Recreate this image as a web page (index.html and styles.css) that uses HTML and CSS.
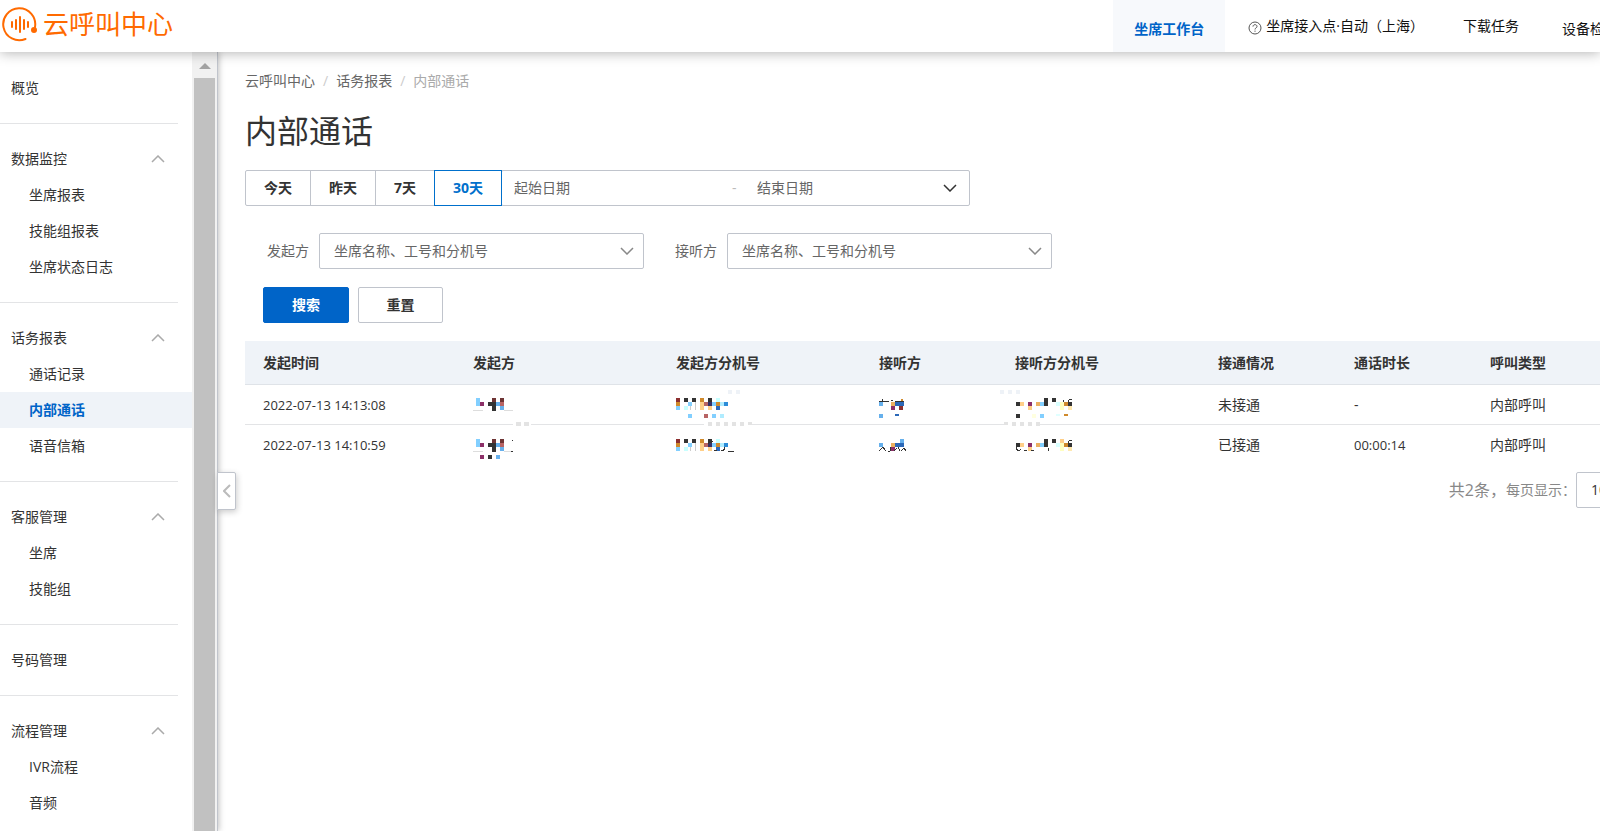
FILE: index.html
```html
<!DOCTYPE html>
<html lang="zh-CN">
<head>
    <meta charset="UTF-8" />
    <title>云呼叫中心</title>
    <link rel="stylesheet" href="styles.css">
</head>
<body>
    <header class="header">
        <a class="logo" href="#">
            <svg width="36" height="36" viewBox="0 0 36 36" fill="none" stroke="#ff6a00" stroke-width="2" stroke-linecap="round">
                <path d="M23.5 33A16 16 0 1 1 33 21" />
                <path d="M10 16v5M14 14v9M18 11v15M22 14v9M26 16v5" />
                <circle cx="32" cy="24" r="2" fill="#ff6a00" />
            </svg>
            <span>云呼叫中心</span>
        </a>
        <nav class="top-nav">
            <a class="workbench" href="#">坐席工作台</a>
            <a class="access-point" href="#">
                <svg width="14" height="14" viewBox="0 0 14 14" fill="none" stroke="#555">
                    <circle cx="7" cy="7" r="6" />
                    <path d="M5 5.6C5 3 9 3 9 5.5C9 7 7 6.8 7 8.5M7 9.6v1.2" />
                </svg>
                坐席接入点·自动（上海）
            </a>
            <a class="downloads" href="#">下载任务</a>
            <a class="device-check" href="#">设备检测</a>
        </nav>
    </header>

    <div class="layout">
        <aside class="sidebar">
            <nav class="menu">
                <section class="group">
                    <a class="group-title" href="#">概览</a>
                </section>
                <section class="group">
                    <button class="group-title">数据监控
                        <svg class="chevron" viewBox="0 0 14 8"><path d="M1 7L7 1L13 7" /></svg>
                    </button>
                    <a class="item" href="#">坐席报表</a>
                    <a class="item" href="#">技能组报表</a>
                    <a class="item" href="#">坐席状态日志</a>
                </section>
                <section class="group">
                    <button class="group-title">话务报表
                        <svg class="chevron" viewBox="0 0 14 8"><path d="M1 7L7 1L13 7" /></svg>
                    </button>
                    <a class="item" href="#">通话记录</a>
                    <a class="item active" href="#">内部通话</a>
                    <a class="item" href="#">语音信箱</a>
                </section>
                <section class="group">
                    <button class="group-title">客服管理
                        <svg class="chevron" viewBox="0 0 14 8"><path d="M1 7L7 1L13 7" /></svg>
                    </button>
                    <a class="item" href="#">坐席</a>
                    <a class="item" href="#">技能组</a>
                </section>
                <section class="group">
                    <a class="group-title" href="#">号码管理</a>
                </section>
                <section class="group">
                    <button class="group-title">流程管理
                        <svg class="chevron" viewBox="0 0 14 8"><path d="M1 7L7 1L13 7" /></svg>
                    </button>
                    <a class="item" href="#">IVR流程</a>
                    <a class="item" href="#">音频</a>
                </section>
            </nav>
            <div class="scrollbar">
                <div class="scroll-arrow"></div>
                <div class="scroll-thumb"></div>
            </div>
            <button class="collapse" aria-label="收起菜单">
                <svg width="8" height="14" viewBox="0 0 8 14" fill="none" stroke="#bbb" stroke-width="2"><path d="M7 1L1 7L7 13" /></svg>
            </button>
        </aside>

        <main class="content">
            <nav class="breadcrumb">
                <a href="#">云呼叫中心</a><span class="slash">/</span><a href="#">话务报表</a><span class="slash">/</span><span class="current">内部通话</span>
            </nav>
            <h1>内部通话</h1>

            <div class="date-filter">
                <button>今天</button>
                <button>昨天</button>
                <button>7天</button>
                <button class="selected">30天</button>
                <div class="range">
                    <input class="start" type="text" placeholder="起始日期" aria-label="起始日期">
                    <span class="dash">-</span>
                    <input class="end" type="text" placeholder="结束日期" aria-label="结束日期">
                    <svg class="chevron dark" viewBox="0 0 14 8"><path d="M1 1L7 7L13 1" /></svg>
                </div>
            </div>

            <form class="filters">
                <div class="field">
                    <label for="caller">发起方</label>
                    <select id="caller"><option>坐席名称、工号和分机号</option></select>
                </div>
                <div class="field">
                    <label for="callee">接听方</label>
                    <select id="callee"><option>坐席名称、工号和分机号</option></select>
                </div>
            </form>

            <div class="actions">
                <button class="btn primary">搜索</button>
                <button class="btn">重置</button>
            </div>

            <!-- masked names and numbers -->
            <svg class="defs" width="0" height="0">
                <symbol id="mask-caller" overflow="visible">
                    <path fill="#82cfff" d="M3 13h4v8h-4z" />
                    <path fill="#8c3068" d="M7 17h4v4h-4z" />
                    <path fill="#333" d="M15 17h8v9h-4v-5h-4z" />
                    <path fill="#6e3434" d="M19 13h4v4h-4zM27 13h4v4h-4z" />
                    <path fill="#66b0ec" d="M23 17h4v4h-4zM27 21h4v4h-4z" />
                    <path fill="#b86464" d="M27 17h4v4h-4z" />
                    <path fill="#ddd" d="M0 25h10v1h-10zM31 25h9v1h-9z" />
                </symbol>
                <symbol id="mask-caller-ext" overflow="visible">
                    <path fill="#8c2f2f" d="M0 13h4v4h-4z" />
                    <path fill="#d08a2c" d="M0 17h4v4h-4zM24 13h4v4h-4zM40 17h4v4h-4z" />
                    <path fill="#82cfff" d="M0 21h4v4h-4zM12 17h4v4h-4zM36 17h4v4h-4z" />
                    <path fill="#333" d="M8 13h4v4h-4zM16 13h4v4h-4zM32 13h4v4h-4z" />
                    <path fill="#c8ffff" d="M8 21h4v4h-4zM40 13h4v4h-4z" />
                    <path fill="#ffcf88" d="M24 17h4v8h-4zM32 21h4v4h-4z" />
                    <path fill="#b86464" d="M28 17h4v4h-4z" />
                    <path fill="#333068" d="M32 17h4v4h-4z" />
                    <path fill="#2c68b8" d="M40 21h4v4h-4z" />
                    <path fill="#b0ecff" d="M44 17h4v4h-4z" />
                    <path fill="#2c8cd8" d="M48 17h4v4h-4z" />
                    <path fill="#ccc" d="M14 21h1v4h-1zM19 17h1v8h-1z" />
                </symbol>
                <symbol id="mask-callee" overflow="visible">
                    <path fill="#66b0ec" d="M0 17h4v4h-4z" />
                    <path fill="#ecb060" d="M12 17h4v4h-4z" />
                    <path fill="#8c3068" d="M12 21h4v4h-4z" />
                    <path fill="#2c68b8" d="M16 17h9v4h-9z" />
                </symbol>
                <symbol id="mask-callee-ext" overflow="visible">
                    <path fill="#333" d="M1 17h4v4h-4zM29 13h4v8h-4zM37 13h4v4h-4zM53 17h4v4h-4z" />
                    <path fill="#ffcf88" d="M5 17h4v4h-4zM13 21h4v4h-4z" />
                    <path fill="#8c3068" d="M13 17h4v4h-4z" />
                    <path fill="#ecb060" d="M21 17h4v4h-4z" />
                    <path fill="#82cfff" d="M25 17h4v4h-4z" />
                    <path fill="#d8ffff" d="M41 17h4v4h-4z" />
                    <path fill="#ffffc0" d="M45 17h4v8h-4z" />
                    <path fill="#d08a2c" d="M49 17h4v4h-4z" />
                    <path fill="#ffe8b0" d="M53 21h4v4h-4z" />
                    <path fill="none" stroke="#333" d="M53 17c0-2 1-3 4-3" />
                </symbol>
            </svg>

            <table class="calls">
                <colgroup>
                    <col class="col-time"><col class="col-wide"><col class="col-wide"><col class="col-narrow">
                    <col class="col-wide"><col class="col-narrow"><col class="col-narrow"><col>
                </colgroup>
                <thead>
                    <tr>
                        <th>发起时间</th>
                        <th>发起方</th>
                        <th>发起方分机号</th>
                        <th>接听方</th>
                        <th>接听方分机号</th>
                        <th>接通情况</th>
                        <th>通话时长</th>
                        <th>呼叫类型</th>
                    </tr>
                </thead>
                <tbody>
                    <tr>
                        <td class="num">2022-07-13 14:13:08</td>
                        <td>
                            <svg class="mask" viewBox="0 0 80 40">
                                <use href="#mask-caller" />
                                <path fill="#fff" d="M40 39h18v1h-18z" />
                                <path fill="#e3e3e3" d="M43 37h5v4h-5zM51 37h5v4h-5z" />
                            </svg>
                        </td>
                        <td>
                            <svg class="mask" viewBox="0 0 80 40">
                                <use href="#mask-caller-ext" />
                                <path fill="#82cfff" d="M12 29h4v4h-4zM36 29h4v4h-4z" />
                                <path fill="#b86464" d="M28 29h4v4h-4z" />
                                <path fill="#b0ecff" d="M44 29h4v4h-4z" />
                                <path fill="#eef2f7" d="M52 5h4v4h-4zM60 5h4v4h-4z" />
                                <path fill="#fff" d="M28 39h45v1h-45z" />
                                <path fill="#e3e3e3" d="M32 37h4v4h-4zM40 37h4v4h-4zM48 37h4v4h-4zM56 37h4v4h-4zM64 37h4v4h-4zM72 37h4v3h-4z" />
                            </svg>
                        </td>
                        <td>
                            <svg class="mask" viewBox="0 0 80 40">
                                <use href="#mask-callee" />
                                <path fill="#333" d="M0 16h10v1h-10zM3 14h1v2h-1zM12 15h2v1h-2zM16 16h9v1h-9z" />
                                <path fill="#d08a2c" d="M22 14h2v2h-2z" />
                                <path fill="#8c2f2f" d="M20 21h4v4h-4z" />
                                <path fill="#66b0ec" d="M0 29h4v4h-4z" />
                                <path fill="#2c68b8" d="M16 29h4v2h-4z" />
                            </svg>
                        </td>
                        <td>
                            <svg class="mask" viewBox="0 0 80 40">
                                <use href="#mask-callee-ext" />
                                <path fill="#333" d="M1 29h4v4h-4zM48 15h1v2h-1z" />
                                <path fill="#ffffe0" d="M17 29h4v4h-4z" />
                                <path fill="#82cfff" d="M25 29h4v4h-4z" />
                                <path fill="#e0ffff" d="M41 29h4v2h-4z" />
                                <path fill="#d08a2c" d="M49 29h4v2h-4z" />
                                <path fill="#eef2f7" d="M-15 5h4v4h-4zM-7 5h4v4h-4zM1 5h4v4h-4z" />
                                <path fill="#fff" d="M-7 39h30v1h-30z" />
                                <path fill="#e3e3e3" d="M-11 37h4v3h-4zM-3 37h4v4h-4zM5 37h4v4h-4zM13 37h4v4h-4zM21 37h4v4h-4z" />
                            </svg>
                        </td>
                        <td>未接通</td>
                        <td>-</td>
                        <td>内部呼叫</td>
                    </tr>
                    <tr>
                        <td class="num">2022-07-13 14:10:59</td>
                        <td>
                            <svg class="mask" viewBox="0 0 80 40">
                                <use href="#mask-caller" />
                                <path fill="#8c3068" d="M7 29h4v4h-4z" />
                                <path fill="#333" d="M15 29h4v4h-4zM39 14h1v1h-1zM38 25h2v1h-2z" />
                                <path fill="#66b0ec" d="M23 29h4v4h-4z" />
                            </svg>
                        </td>
                        <td>
                            <svg class="mask" viewBox="0 0 80 40">
                                <use href="#mask-caller-ext" />
                                <path fill="none" stroke="#333" d="M37 15h-4l-1 3M38 24h3M45 24c3 1 4-1 4-3M52 25h6" />
                            </svg>
                        </td>
                        <td>
                            <svg class="mask" viewBox="0 0 80 40">
                                <use href="#mask-callee" />
                                <path fill="#66b0ec" d="M21 13h4v4h-4z" />
                                <path fill="none" stroke="#333" d="M0 25l4-4l3 4M9 26l2-1v-4M15 25l3-3M19 21l2 4M22 25l3-3l2 3" />
                            </svg>
                        </td>
                        <td>
                            <svg class="mask" viewBox="0 0 80 40">
                                <use href="#mask-callee-ext" />
                                <path fill="#ffcf88" d="M45 13h4v4h-4z" />
                                <path fill="none" stroke="#333" d="M1 21c0 4 4 4 5 2M9 24h3M16 24h3M33 22v3" />
                            </svg>
                        </td>
                        <td>已接通</td>
                        <td class="num">00:00:14</td>
                        <td>内部呼叫</td>
                    </tr>
                </tbody>
            </table>

            <div class="pagination">
                <span class="total">共2条，</span>
                <label for="page-size">每页显示：</label>
                <select id="page-size"><option>10</option></select>
            </div>
        </main>
    </div>
</body>
</html>
```
FILE: styles.css
```css
* {
    box-sizing: border-box;
}

body {
    margin: 0;
    height: 100vh;
    display: flex;
    flex-direction: column;
    overflow: hidden;
    font-family: "Open Sans", "Noto Sans CJK SC", sans-serif;
    font-size: 14px;
    line-height: 20px;
    color: #333;
    background: #fff;
}

a {
    color: inherit;
    text-decoration: none;
}

button, input, select {
    font: inherit;
    color: inherit;
    margin: 0;
}

button {
    cursor: pointer;
}

/* top bar */
.header {
    display: flex;
    flex-shrink: 0;
    justify-content: space-between;
    height: 52px;
    background: #fff;
    box-shadow: 0 1px 12px rgba(0, 0, 0, 0.3);
    position: relative;
    z-index: 2;
}

.logo {
    display: flex;
    align-items: center;
    gap: 5px;
    padding: 0 0 5px 2px;
    color: #ff6a00;
    font-size: 26px;
    line-height: 36px;
}

.top-nav {
    display: flex;
    margin-right: -40px;
    color: #111;
    white-space: nowrap;
}

.top-nav a {
    padding-top: 16px;
}

.top-nav .workbench {
    padding: 19px 21px 0;
    margin-right: 23px;
    background: #f7f9fc;
    color: #0064c8;
    font-weight: bold;
}

.access-point {
    display: flex;
    gap: 4px;
    margin-right: 39px;
}

.access-point svg {
    margin-top: 5px;
}

.downloads {
    margin-right: 43px;
}

.top-nav .device-check {
    padding-top: 19px;
    padding-right: 22px;
}

.layout {
    display: flex;
    flex: 1;
    min-height: 0;
}

/* side menu */
.sidebar {
    display: flex;
    flex-shrink: 0;
    position: relative;
    border-right: 1px solid #c0c4cc;
    box-shadow: 1px 0 6px rgba(0, 0, 0, 0.25);
}

.menu {
    width: 192px;
    padding-top: 1px;
    overflow: hidden;
}

.group {
    padding: 17px 0;
}

.group:not(:last-child)::after {
    content: "";
    display: block;
    width: 178px;
    border-bottom: 1px solid #e3e4e6;
    margin-top: 17px;
    margin-bottom: -17px;
}

.group-title, .item {
    display: flex;
    align-items: center;
    width: 100%;
    height: 36px;
    padding: 0 27px 0 11px;
    border: none;
    background: none;
}

.group-title {
    justify-content: space-between;
}

.item {
    padding-left: 29px;
}

.item.active {
    background: #eff3f8;
    color: #0064c8;
    font-weight: bold;
}

.chevron {
    width: 14px;
    height: 8px;
    fill: none;
    stroke: #aaa;
    stroke-width: 1.5;
}

.chevron.dark {
    stroke: #333;
}

.scrollbar {
    width: 25px;
    padding: 11px 2px 0 2px;
    background: #f1f1f1;
    display: flex;
    flex-direction: column;
    align-items: center;
    gap: 9px;
}

.scroll-arrow {
    border: 6px solid transparent;
    border-top: none;
    border-bottom-color: #a3a3a3;
}

.scroll-thumb {
    flex: 1;
    width: 100%;
    background: #c1c1c1;
}

.collapse {
    position: absolute;
    top: 420px;
    left: 100%;
    width: 19px;
    height: 38px;
    padding: 0;
    display: flex;
    align-items: center;
    justify-content: center;
    background: #fff;
    border: 1px solid #c0c4cc;
    border-radius: 0 2px 2px 0;
    box-shadow: 1px 2px 6px rgba(0, 0, 0, 0.2);
}

/* page */
.content {
    flex: 1;
    min-width: 0;
    padding: 19px 0 0 27px;
    overflow: hidden;
}

.breadcrumb {
    color: #666;
}

.breadcrumb .slash {
    padding: 0 8px;
    color: #ccc;
}

.breadcrumb .current {
    color: #aaa;
}

h1 {
    margin: 19px 0;
    font-size: 32px;
    line-height: 41px;
    font-weight: normal;
}

.date-filter {
    display: flex;
}

.date-filter button {
    height: 36px;
    padding: 0 18px;
    margin-right: -1px;
    background: #fff;
    border: 1px solid #c0c4cc;
    font-weight: bold;
}

.date-filter button:first-child {
    border-radius: 2px 0 0 2px;
}

.date-filter .selected {
    border-color: #0070cc;
    color: #0070cc;
    z-index: 1;
}

.range {
    display: flex;
    align-items: center;
    width: 469px;
    height: 36px;
    padding: 0 12px;
    border: 1px solid #c0c4cc;
    border-radius: 2px;
}

.range input {
    border: none;
    outline: none;
    padding: 0;
    width: 216px;
}

.range .end {
    flex: 1;
}

.range .dash {
    width: 27px;
    padding-left: 2px;
    color: #bbb;
}

::placeholder {
    color: #666;
}

.filters {
    display: flex;
    gap: 31px;
    margin-top: 27px;
    padding-left: 22px;
}

.field {
    display: flex;
    align-items: center;
    gap: 10px;
    color: #666;
}

select {
    appearance: none;
    height: 36px;
    padding: 0 14px;
    border: 1px solid #c0c4cc;
    border-radius: 2px;
    background: #fff url("data:image/svg+xml,%3Csvg xmlns='http://www.w3.org/2000/svg' width='14' height='8' fill='none' stroke='%23888' stroke-width='1.5'%3E%3Cpath d='M1 1L7 7L13 1'/%3E%3C/svg%3E") no-repeat right 9px center;
}

.field select {
    width: 325px;
}

.actions {
    display: flex;
    gap: 9px;
    margin: 18px 0;
    padding-left: 18px;
}

.btn {
    width: 85px;
    height: 36px;
    background: #fff;
    border: 1px solid #c0c4cc;
    border-radius: 2px;
    font-weight: bold;
}

.btn.primary {
    width: 86px;
    background: #0064c8;
    border-color: #0064c8;
    color: #fff;
}

.defs {
    display: block;
}

.calls {
    width: 100%;
    table-layout: fixed;
    border-collapse: separate;
    border-spacing: 0;
}

.col-time {
    width: 210px;
}

.col-wide {
    width: 203px;
}

.col-narrow {
    width: 136px;
}

.calls th {
    height: 44px;
    padding: 1px 18px 0;
    background: #eff3f8;
    border-bottom: 1px solid #dfe3e8;
    text-align: left;
}

.calls td {
    height: 40px;
    padding: 0 18px;
}

.calls tbody tr:first-child td {
    border-bottom: 1px solid #e3e4e6;
}

.calls .num {
    font-size: 13px;
    white-space: nowrap;
}

.mask {
    display: block;
    width: 80px;
    height: 40px;
    margin-bottom: -1px;
    overflow: visible;
    shape-rendering: crispEdges;
}

.pagination {
    display: flex;
    align-items: center;
    justify-content: flex-end;
    margin: 7px -40px 0 0;
    color: #888;
}

.pagination .total {
    font-size: 16px;
}

.pagination select {
    width: 64px;
    color: #333;
}
```
